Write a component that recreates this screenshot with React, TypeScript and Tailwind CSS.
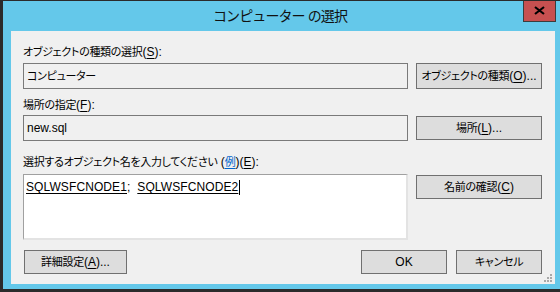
import React from "react";

const U = ({ c }: { c: string }) => <span className="underline underline-offset-2">{c}</span>;
const J = ({ children }: { children: React.ReactNode }) => (
  <span className="text-[11px] tracking-[-0.3px] [font-feature-settings:'palt'_1]">{children}</span>
);

const Btn = ({ children, w, h = 24 }: { children: React.ReactNode; w: string; h?: number }) => (
  <div
    className={`${w} ${h === 26 ? "h-[26px]" : "h-[24px]"} shrink-0 border border-[#707070] bg-[#dddddd] flex items-center justify-center whitespace-nowrap text-[12px] leading-[16px] text-black`}
  >
    {children}
  </div>
);

export default function App() {
  return (
    <div className="w-[560px] h-[292px] bg-[#64c8ea] border-l-[3px] border-t border-b-[3px] border-[#2b2b2b] flex flex-col relative overflow-hidden text-black font-['Liberation_Sans','Noto_Sans_CJK_JP',sans-serif]">
      {/* title bar */}
      <div className="h-[30px] flex items-center justify-center text-[14px] leading-[20px] tracking-[-0.9px] text-[#111] pr-[3px]">
        コンピューター の選択
      </div>
      <div className="absolute right-[4px] top-[-1px] w-[33px] h-[22px] bg-[#c75050] border border-[#3c3c3c] border-t-0 flex items-center justify-center">
        <svg width="11" height="9" viewBox="0 0 11 9">
          <path d="M1 1 L10 8 M10 1 L1 8" stroke="#000" strokeWidth="2.2" />
        </svg>
      </div>

      {/* client */}
      <div className="ml-[8px] mr-[5px] h-[253px] bg-[#f0f0f0] flex flex-col pl-[12px] pr-[13px] pt-[13px] relative text-[12px]">
        <div className="h-[16px] leading-[16px] whitespace-nowrap">
          <J>オブジェクトの種類の選択</J>(<U c="S" />):
        </div>
        <div className="mt-[3px] flex gap-[8px] items-center">
          <div className="flex-1 h-[26px] border border-[#7a7a7a] bg-[#f0f0f0] flex items-center pl-[3px] leading-[16px]">
            <J>コンピューター</J>
          </div>
          <Btn w="w-[126px]" h={26}>
            <J>オブジェクトの種類</J>(<U c="O" />)...
          </Btn>
        </div>

        <div className="mt-[8px] h-[16px] leading-[16px] whitespace-nowrap">
          <J>場所の指定</J>(<U c="F" />):
        </div>
        <div className="mt-[2px] flex gap-[8px] items-center">
          <div className="flex-1 h-[26px] border border-[#7a7a7a] bg-[#f0f0f0] flex items-center pl-[3px] leading-[16px]">
            new.sql
          </div>
          <Btn w="w-[126px]">
            <J>場所</J>(<U c="L" />)...
          </Btn>
        </div>

        <div className="mt-[13px] h-[16px] leading-[16px] whitespace-nowrap">
          <J>選択するオブジェクト名を入力してください</J> (
          <span className="text-[#0066cc] underline underline-offset-2">
            <J>例</J>
          </span>
          )(<U c="E" />):
        </div>
        <div className="mt-[4px] flex gap-[8px] items-start">
          <div className="flex-1 h-[66px] border-t border-l border-[#a0a0a0] border-r-2 border-b-2 border-r-[#e3e3e3] border-b-[#e3e3e3] bg-white pl-[2px] pt-[4px]">
            <div className="flex items-center leading-[16px] whitespace-pre tracking-[0.1px]">
              <span className="underline underline-offset-2">SQLWSFCNODE1</span>
              <span>;  </span>
              <span className="underline underline-offset-2">SQLWSFCNODE2</span>
              <span className="w-px h-[15px] bg-black ml-px" />
            </div>
          </div>
          <div className="mt-[1px]">
            <Btn w="w-[126px]">
              <J>名前の確認</J>(<U c="C" />)
            </Btn>
          </div>
        </div>

        <div className="mt-[10px] flex items-center">
          <div className="ml-px">
            <Btn w="w-[103px]">
              <J>詳細設定</J>(<U c="A" />)...
            </Btn>
          </div>
          <div className="flex-1" />
          <Btn w="w-[86px]">OK</Btn>
          <div className="w-[9px]" />
          <Btn w="w-[86px]">
            <J>キャンセル</J>
          </Btn>
        </div>

        <svg className="absolute right-[3px] bottom-[1px]" width="10" height="10" viewBox="0 0 10 10">
          {[
            [8, 0],
            [5, 3],
            [8, 3],
            [2, 6],
            [5, 6],
            [8, 6],
          ].map(([x, y], i) => (
            <rect key={i} x={x} y={y + 1} width="2" height="2" fill="#a8a8a8" />
          ))}
        </svg>
      </div>
    </div>
  );
}
